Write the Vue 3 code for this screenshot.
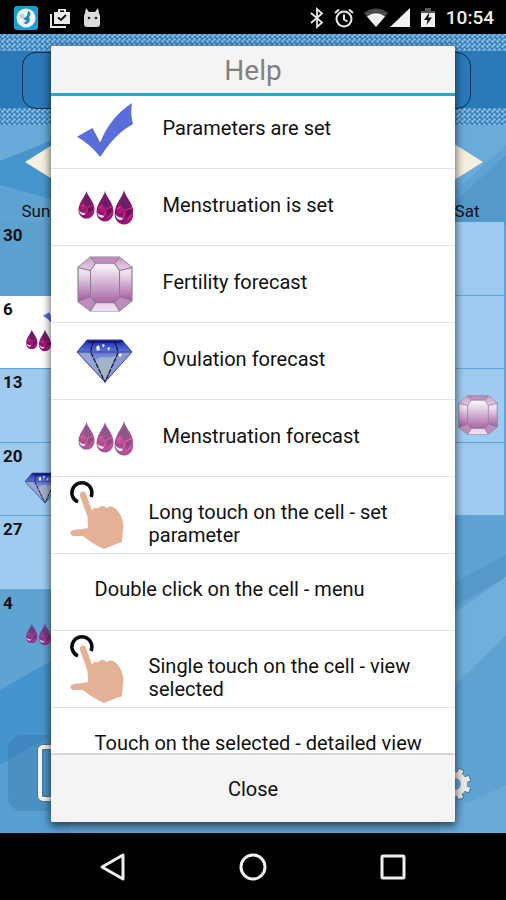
<template>
  <div class="phone">
    <!-- shared icon shapes -->
    <svg class="defs" width="0" height="0" aria-hidden="true">
      <defs>
        <linearGradient id="gemFill" x1="0" y1="0" x2="0" y2="1">
          <stop offset="0" stop-color="#d9b4d8" />
          <stop offset="0.3" stop-color="#f0e2f2" />
          <stop offset="0.8" stop-color="#a65ca2" />
          <stop offset="1" stop-color="#8f4a8c" />
        </linearGradient>
        <linearGradient id="gemTable" x1="0" y1="0" x2="0" y2="1">
          <stop offset="0.1" stop-color="#f6eef8" />
          <stop offset="1" stop-color="#a866a6" />
        </linearGradient>
        <linearGradient id="gemRim" x1="0" y1="0" x2="0" y2="1">
          <stop offset="0" stop-color="#b98aba" />
          <stop offset="1" stop-color="#efe0f0" />
        </linearGradient>
        <linearGradient id="gemCorner" x1="0" y1="0" x2="0" y2="1">
          <stop offset="0" stop-color="#c79bc8" />
          <stop offset="1" stop-color="#e6cfe8" />
        </linearGradient>
        <linearGradient id="diaFill" x1="0" y1="0" x2="0" y2="1">
          <stop offset="0" stop-color="#1b2496" />
          <stop offset="0.2" stop-color="#4a5fd0" />
          <stop offset="0.5" stop-color="#8c9fe0" />
          <stop offset="1" stop-color="#5a6ec4" />
        </linearGradient>
        <linearGradient id="dropFill" x1="0" y1="0" x2="1" y2="1">
          <stop offset="0" stop-color="#6d2a6c" />
          <stop offset="0.5" stop-color="#8a1270" />
          <stop offset="1" stop-color="#a81a7a" />
        </linearGradient>
        <symbol id="drop" viewBox="0 0 18 32" preserveAspectRatio="none">
          <path d="M9 0C10 6 17.500 12 17.500 21C17.500 27 14 31.500 9 31.500C4 31.500 0.500 27 0.500 22C0.500 13 8 6 9 0Z" fill="url(#dropFill)" />
          <path d="M9 3L5 14L10 19L14 14Z" fill="#5e2460" opacity="0.7" />
          <path d="M10 19L15 15L16 22L12 27Z" fill="#6c0f55" />
          <path d="M2 17L6 14L10 19L5 22Z" fill="#b8187c" />
          <path d="M10 19L16 16M6 14L3 18M10 20L8 26M12 27L16 22" stroke="#ea2c86" stroke-width="1" fill="none" />
          <path d="M1 22C4 26 6 24 8 26C7 29 2 28 1 22Z" fill="#f6d8ee" />
        </symbol>
        <symbol id="drops" viewBox="0 0 56 56">
          <use href="#drop" x="1" y="12" width="17" height="28" />
          <use href="#drop" x="19" y="12" width="18" height="31" />
          <use href="#drop" x="37" y="11" width="20" height="35" />
        </symbol>
        <symbol id="check" viewBox="-2 0 58 58">
          <path d="M-2 36L14 27L22 42Q32 16 55 1Q53 12 56 23Q38 32 22 57Q12 44 -2 36Z" fill="#5a6edb" />
        </symbol>
        <symbol id="gem" viewBox="0 0 54 54">
          <path d="M13 1H41L53 11V43L41 53H13L1 44V11Z" fill="url(#gemFill)" stroke="#8c8490" stroke-width="1.200" />
          <path d="M13 1H41L36 7H18ZM18 45H36L41 53H13Z" fill="url(#gemRim)" />
          <path d="M1 11L13 1L18 7L13 14ZM53 11L41 1L36 7L41 14Z" fill="url(#gemCorner)" />
          <path d="M1 44L13 39L18 45L13 53ZM53 43L41 39L36 45L41 53Z" fill="#bd8cbc" />
          <path d="M18 7H36L41 14V39L36 45H18L13 39V14Z" fill="url(#gemTable)" stroke="#8c7c90" stroke-width="1" />
          <path d="M13 1L18 7M41 1L36 7M1 11L13 14M53 11L41 14M1 44L13 39M53 43L41 39M13 53L18 45M41 53L36 45" stroke="#857a88" stroke-width="1" />
        </symbol>
        <symbol id="diamond" viewBox="0 0 56 56">
          <path d="M10 7H45L55 19L28 49L0 19Z" fill="url(#diaFill)" />
          <path d="M0 19L14 20L28 49Z" fill="#96a6d6" />
          <path d="M55 19L41 20L28 49Z" fill="#8797d4" />
          <path d="M18 28C24 20 32 28 39 22L28 49Z" fill="#a5b3c6" />
          <path d="M10 7H45L43 10H12Z" fill="#10178a" />
          <path d="M19 14L22 12L23 17L20 18ZM25 11L28 12L26 15ZM30 15L33 14L32 18Z" fill="#e7edff" />
          <circle cx="43" cy="22" r="1.500" fill="#fff" />
          <path d="M17 8Q14 13 14 20L28 49L41 20Q40 13 37 8" stroke="#14183e" stroke-width="1.300" fill="none" stroke-dasharray="5 1" />
          <path d="M10 7H45L55 19L28 49L0 19ZM0 19H55" stroke="#3c4890" stroke-width="1" fill="none" />
        </symbol>
        <symbol id="hand" viewBox="0 0 57 70">
          <path d="M9 22A10 10 0 1 1 22 17" stroke="#0b0b0b" stroke-width="3.500" fill="none" />
          <path d="M11 16C10 11 16 10 17 14L23 31Q24 27 29 28.500Q33 24 38 28Q42 24 49 31Q54 38 54.500 46L53 61Q53 63 50 63L35 69Q28 66 22 62L14 56L4 56Q1 55 1.500 52Q3 49 10 49.500L19 48L18.500 37Z" fill="#e4b196" />
        </symbol>
      </defs>
    </svg>

    <header class="status">
      <div class="status-group">
        <svg class="s-app" viewBox="0 0 24 24">
          <rect width="24" height="24" rx="3" fill="#1b9fd2" />
          <circle cx="12" cy="12" r="9.500" fill="#eaf4f8" />
          <path d="M14 5C17 6 17 9 15 11C17 14 15 18 12 18L9 17L13 15L9 13L13 10Z" fill="#2384b4" />
          <circle cx="8" cy="10" r="2.500" fill="#b8d4e0" />
        </svg>
        <svg class="s-ico" viewBox="0 0 20 20">
          <path d="M1 6V19H16" stroke="#e8e8e8" stroke-width="2" fill="none" />
          <path d="M4 4H8V1H16V4H20V16H4ZM10 4H14V2.500H10Z" fill="#e8e8e8" fill-rule="evenodd" />
          <path d="M8 9.500L11 12L16 7" stroke="#111" stroke-width="2" fill="none" />
        </svg>
        <svg class="s-ico" viewBox="0 0 20 20">
          <path d="M3 5L4 0L7 4H13L16 0L17 5L18 8V16Q18 19 15 19H5Q2 19 2 16V8Z" fill="#dcdcdc" />
          <circle cx="7" cy="10" r="1.300" fill="#222" />
          <circle cx="14" cy="10" r="1.300" fill="#222" />
        </svg>
      </div>
      <div class="status-group right">
        <svg class="s-bt" viewBox="0 0 14 20">
          <path d="M1 5L12 14.500L7 19V1L12 5.500L1 15" stroke="#e8e8e8" stroke-width="1.800" fill="none" />
        </svg>
        <svg class="s-ico" viewBox="0 0 20 20">
          <circle cx="10" cy="11" r="7.500" stroke="#e8e8e8" stroke-width="2" fill="none" />
          <path d="M1 5L5 1.500M19 5L15 1.500M10 6.500V11.500L13.500 13.500" stroke="#e8e8e8" stroke-width="2" fill="none" />
        </svg>
        <div class="signals">
          <svg class="s-wifi" viewBox="0 0 24 20">
            <path d="M0 5Q12 -4 24 5L12 19Z" fill="#4b4b4b" />
            <path d="M3 8.500Q12 2 21 8.500L12 19Z" fill="#f2f2f2" />
          </svg>
          <svg class="s-ico" viewBox="0 0 20 20"><path d="M20 0V19H0Z" fill="#f0f0f0" /></svg>
        </div>
        <svg class="s-bat" viewBox="0 0 16 20">
          <path d="M1 3H5V0H11V3H15V7H1Z" fill="#555" />
          <path d="M1 5H15V19H1Z" fill="#f0f0f0" />
          <path d="M9.500 4L4 12H7.500L6.500 17L12 9.500H8.500Z" fill="#111" />
        </svg>
        <time class="clock">10:54</time>
      </div>
    </header>

    <main class="app">
      <svg class="facets" viewBox="0 0 506 708" preserveAspectRatio="none" aria-hidden="true">
        <rect width="506" height="708" fill="#5fa3d3" />
        <path d="M0 0H90L0 36Z" fill="#68abda" />
        <path d="M0 36L90 0V85L0 60Z" fill="#4795cd" />
        <path d="M440 0H506V20L440 80Z" fill="#6aabd9" />
        <path d="M440 90L506 30V100H440Z" fill="#5399cc" />
        <path d="M0 565L70 525V620L0 640Z" fill="#4694cd" />
        <path d="M0 640L70 600V708H0Z" fill="#569fd3" />
        <path d="M440 490L506 452V430L440 465Z" fill="#5599cb" />
        <path d="M440 498L506 452V510L440 575Z" fill="#70afdb" />
        <path d="M440 690L506 660V708H440Z" fill="#68a9d8" />
      </svg>

      <section class="banner">
        <div class="banner-box"></div>
      </section>

      <div class="month">
        <button aria-label="Previous month">
          <svg viewBox="0 0 40 36"><path d="M0 18L40 -7V43Z" fill="#f5efdf" /></svg>
        </button>
        <button aria-label="Next month">
          <svg viewBox="0 0 40 36"><path d="M40 18L0 -7V43Z" fill="#f5efdf" /></svg>
        </button>
      </div>

      <div class="weekdays">
        <span v-for="(d, i) in weekdays" :key="i">{{ d }}</span>
      </div>

      <div class="calendar">
        <div v-for="(c, i) in cells" :key="i" class="cell" :class="c.kind">
          <b>{{ c.day }}</b>
          <svg v-if="c.icon" class="cell-icon" :class="{ faded: c.faded }"><use :href="'#' + c.icon" /></svg>
          <svg v-if="c.checked" class="cell-check"><use href="#check" /></svg>
        </div>
      </div>

      <div class="tools">
        <button class="tool-day" aria-label="Today">
          <svg viewBox="0 0 40 58">
            <rect x="3" y="3" width="34" height="52" rx="3" fill="none" stroke="#4e7896" stroke-width="6" />
            <rect x="3" y="3" width="34" height="52" rx="3" fill="none" stroke="#f6f4f2" stroke-width="4" />
          </svg>
        </button>
        <button class="tool-gear" aria-label="Settings">
          <svg viewBox="-17 -17 34 34">
            <g fill="#ebe8e6" stroke="#54748c" stroke-width="1">
              <rect v-for="n in 8" :key="n" x="-3" y="-16" width="6" height="8" rx="1" :transform="`rotate(${n * 45 - 22})`" />
            </g>
            <circle r="9" fill="none" stroke="#ebe8e6" stroke-width="6" />
          </svg>
        </button>
      </div>

      <div v-if="open" class="overlay">
        <div class="dialog" role="dialog" aria-labelledby="help-title">
          <h1 id="help-title">Help</h1>
          <div class="scroller">
            <ul>
              <li v-for="(row, i) in rows" :key="i" :class="row.type">
                <svg v-if="row.icon" :class="{ faded: row.faded }"><use :href="'#' + row.icon" /></svg>
                <span>{{ row.text }}</span>
              </li>
            </ul>
          </div>
          <button class="close" @click="open = false">Close</button>
        </div>
      </div>
    </main>

    <nav class="navbar">
      <button aria-label="Back">
        <svg viewBox="0 0 28 28"><path d="M24 2V26L3 14Z" /></svg>
      </button>
      <button aria-label="Home">
        <svg viewBox="0 0 28 28"><circle cx="14" cy="14" r="12" /></svg>
      </button>
      <button aria-label="Recent apps">
        <svg viewBox="0 0 28 28"><rect x="3" y="3" width="22" height="22" rx="1" /></svg>
      </button>
    </nav>
  </div>
</template>

<script setup>
import { ref } from 'vue'

const open = ref(true)

const rows = [
  { type: 'mark', icon: 'check', text: 'Parameters are set' },
  { type: 'mark', icon: 'drops', text: 'Menstruation is set' },
  { type: 'mark', icon: 'gem', text: 'Fertility forecast' },
  { type: 'mark', icon: 'diamond', text: 'Ovulation forecast' },
  { type: 'mark', icon: 'drops', faded: true, text: 'Menstruation forecast' },
  { type: 'touch', icon: 'hand', text: 'Long touch on the cell - set parameter' },
  { type: 'plain', text: 'Double click on the cell - menu' },
  { type: 'touch', icon: 'hand', text: 'Single touch on the cell - view selected' },
  { type: 'plain', text: 'Touch on the selected - detailed view' }
]

const weekdays = ['Sun', '', '', '', '', '', 'Sat']

// day numbers and marks keyed by cell index, 7 cells to a week
const days = { 0: 30, 7: 6, 14: 13, 21: 20, 28: 27, 35: 4 }
const marks = {
  7: { icon: 'drops', checked: true },
  20: { icon: 'gem' },
  21: { icon: 'diamond' },
  35: { icon: 'drops', faded: true }
}
const cells = Array.from({ length: 42 }, (_, i) => ({
  day: days[i] || '',
  kind: i === 7 ? 'today' : i < 2 || i > 31 ? 'other' : 'current',
  ...marks[i]
}))
</script>

<style>
body { margin: 0; background: #000; }
</style>

<style scoped>
.phone { display: flex; flex-direction: column; min-height: 100vh; background: #000; font-family: Roboto, "Liberation Sans", sans-serif; color: #111; overflow: hidden; }
.phone * { box-sizing: border-box; }
.defs { position: absolute; }
button { border: 0; padding: 0; background: none; font: inherit; color: inherit; cursor: pointer; }
svg { display: block; overflow: visible; flex: none; }
.faded { opacity: 0.75; }

.status { display: flex; justify-content: space-between; align-items: center; height: 34px; padding: 2px 12px 0 14px; background: #000; }
.status-group { display: flex; align-items: center; gap: 12px; }
.status-group.right { gap: 10px; }
.signals { display: flex; gap: 2px; }
.s-app { width: 24px; height: 24px; }
.s-ico { width: 20px; height: 20px; }
.s-bt { width: 14px; height: 20px; }
.s-wifi { width: 24px; height: 20px; }
.s-bat { width: 16px; height: 20px; }
.clock { color: #eee; font-size: 19px; font-weight: 500; line-height: 20px; }

.app { position: relative; flex: 1; display: flex; flex-direction: column; background: #5fa3d3; overflow: hidden; }
.facets { position: absolute; left: 0; bottom: 0; width: 100%; height: calc(100% - 91px); }

.banner { position: relative; padding: 17px 0; background-color: #3782bc; background-image: radial-gradient(#9ccbec 15%, transparent 50%), radial-gradient(#9ccbec 15%, transparent 50%); background-size: 5px 5px; background-position: 0 0, 2px 3px; }
.banner-box { height: 57px; padding: 1px 35px 1px 22px; background: #2a79b8; }
.banner-box::before { content: ""; display: block; height: 55px; border: 1px solid #0d2c47; border-radius: 14px; }

.month { position: relative; display: flex; justify-content: space-between; align-items: center; height: 73px; padding: 0 23px 0 25px; }
.month svg { width: 40px; height: 36px; }
.weekdays { position: relative; display: grid; grid-template-columns: repeat(7, 1fr); height: 24px; padding-right: 3px; text-align: center; font-size: 17px; line-height: 26px; }

.calendar { position: relative; display: grid; grid-template-columns: repeat(7, 1fr); grid-template-rows: repeat(6, 1fr); height: 441px; padding-right: 1px; }
.cell { position: relative; display: flex; justify-content: flex-end; align-items: flex-end; padding: 0 6px 7px 3px; border-right: 1px solid #5ea5de; border-bottom: 1px solid #5ea5de; }
.cell.current { background: #9fcbf1; }
.cell.today { background: #fff; }
.cell.other { border-color: transparent; background: rgba(80, 150, 200, 0.2); }
.cell.other:nth-child(n + 33) { background: none; }
.cell b { align-self: flex-start; margin-right: auto; padding-top: 2px; font-size: 17px; line-height: 22px; }
.cell-icon { width: 40px; height: 40px; margin-left: -40px; }
.cell-check { position: absolute; left: 43px; top: 6px; width: 22px; height: 22px; }

.tools { position: relative; display: flex; justify-content: space-between; align-items: flex-end; margin-top: auto; padding: 0 34px 22px 8px; }
.tool-day { width: 80px; height: 76px; padding-left: 29px; border-radius: 14px; background: rgba(50, 110, 160, 0.3); }
.tool-day svg { width: 40px; height: 58px; }
.tool-gear { padding-bottom: 10px; }
.tool-gear svg { width: 34px; height: 34px; }

.overlay { position: absolute; inset: 0; display: flex; padding: 12px 10% 11px; }
.dialog { flex: 1; display: flex; flex-direction: column; min-width: 0; background: #fff; border-radius: 2px; box-shadow: 0 3px 8px 1px rgba(0, 0, 0, 0.6); overflow: hidden; }
h1 { flex: none; height: 50px; margin: 0; border-bottom: 3px solid #2aa5d3; background: #f4f4f4; color: #808080; font-size: 28px; font-weight: 400; line-height: 50px; text-align: center; }
.scroller { flex: 1 1 0; min-height: 0; overflow: hidden; }
/* list rests slightly scrolled under the title */
ul { margin: -4px 0 0; padding: 0; list-style: none; }
li { display: flex; align-items: center; height: 77px; border-bottom: 1px solid #e2e2e2; font-size: 20px; line-height: 23px; }
.mark { gap: 30px; padding-left: 26px; }
.mark svg { width: 56px; height: 56px; }
.mark span { padding-bottom: 4px; }
.touch { gap: 23px; padding: 0 18px; }
.touch svg { width: 57px; height: 70px; }
.touch span { padding-top: 18px; }
.plain { padding-left: 44px; line-height: 20px; }
.plain span { padding-bottom: 6px; }
.close { flex: none; height: 69px; border-top: 2px solid #d6d6d6; background: #f4f4f4; font-size: 20px; }

.navbar { display: grid; grid-template-columns: repeat(3, 1fr); height: 67px; padding: 0 43px; background: #000; }
.navbar button { display: flex; align-items: center; justify-content: center; }
.navbar svg { width: 28px; height: 28px; fill: none; stroke: #f0f0f0; stroke-width: 3; stroke-linejoin: round; }
</style>
